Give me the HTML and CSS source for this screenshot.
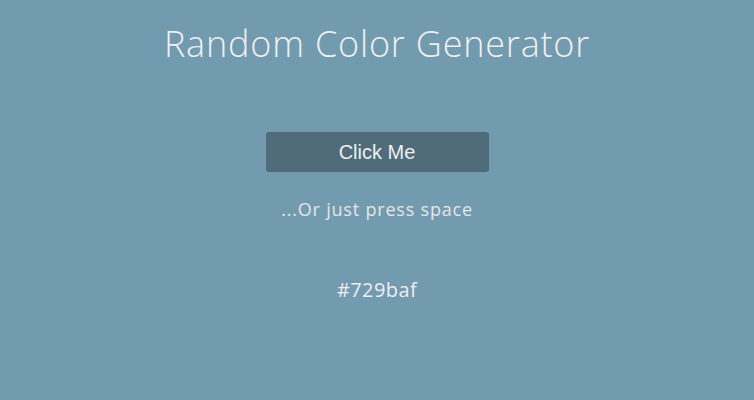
FILE: index.html
```html
<!DOCTYPE html>
<html lang="en">
<head>
<meta charset="utf-8">
<title>Random Color Generator</title>
<link rel="stylesheet" href="styles.css">
</head>
<body>
<main class="page">
  <h1 class="title">Random Color Generator</h1>
  <button class="btn" type="button">Click Me</button>
  <p class="hint">...Or just press space</p>
  <p class="hex">#729baf</p>
</main>
</body>
</html>
```

FILE: styles.css
```css
html, body {
  margin: 0;
  padding: 0;
  height: 100%;
}
body {
  background: #729baf;
  color: #eeeeee;
  font-family: "Open Sans", "Noto Sans", sans-serif;
}
.page {
  display: flex;
  flex-direction: column;
  align-items: center;
}
.title {
  margin: 22px 0 0;
  font-size: 36px;
  font-weight: 300;
  line-height: 44px;
  letter-spacing: 0.8px;
  color: #f0f0f0;
}
.btn {
  margin-top: 66px;
  width: 223px;
  height: 40px;
  border: none;
  border-radius: 3px;
  background: #506c7a;
  color: #eeeeee;
  font-family: "Liberation Sans", Arial, sans-serif;
  font-size: 20px;
  cursor: pointer;
}
.hint {
  margin: 25px 0 0;
  font-size: 18px;
  line-height: 24px;
  letter-spacing: 0.8px;
  color: #e6e6e6;
}
.hex {
  margin: 56px 0 0;
  font-size: 20px;
  line-height: 26px;
  letter-spacing: 0.4px;
  color: #eeeeee;
}
```
